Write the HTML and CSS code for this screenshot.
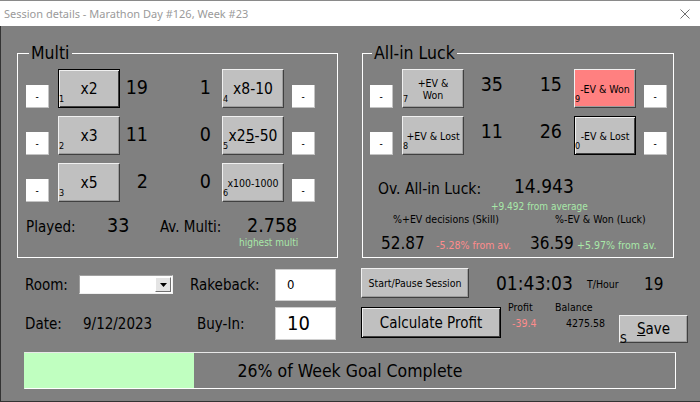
FILE: index.html
```html
<!DOCTYPE html>
<html>
<head>
<meta charset="utf-8">
<title>Session details</title>
<link rel="stylesheet" href="styles.css">
</head>
<body>
<div class="titlebar">
  <span class="ttl">Session details - Marathon Day #126, Week #23</span>
  <svg class="close" viewBox="0 0 10 10" width="10" height="10"><path d="M0.5 0.5 L9.5 9.5 M9.5 0.5 L0.5 9.5" stroke="#707070" stroke-width="1" fill="none"/></svg>
</div>
<div class="client">
  <div class="groups">
    <div class="group g-multi">
      <div class="gtitle">Multi</div>
      <div class="row">
        <div class="minus">-</div>
        <div class="btn b1 focus big">x2<span class="key">1</span></div>
        <div class="cnt cl">19</div>
        <div class="cnt cr">1</div>
        <div class="btn b2 big">x8-10<span class="key">4</span></div>
        <div class="minus m2">-</div>
      </div>
      <div class="row">
        <div class="minus">-</div>
        <div class="btn b1 big">x3<span class="key">2</span></div>
        <div class="cnt cl">11</div>
        <div class="cnt cr">0</div>
        <div class="btn b2 big">x2<u>5</u>-50<span class="key">5</span></div>
        <div class="minus m2">-</div>
      </div>
      <div class="row">
        <div class="minus">-</div>
        <div class="btn b1 big">x5<span class="key">3</span></div>
        <div class="cnt cl">2</div>
        <div class="cnt cr">0</div>
        <div class="btn b2 small">x100-1000<span class="key">6</span></div>
        <div class="minus m2">-</div>
      </div>
      <div class="stats">
        <span class="lbl played">Played:</span>
        <span class="num n33">33</span>
        <span class="lbl avl">Av. Multi:</span>
        <div class="avg">
          <span class="num">2.758</span>
          <span class="green hm">highest multi</span>
        </div>
      </div>
    </div>
    <div class="group g-luck">
      <div class="gtitle">All-in Luck</div>
      <div class="row">
        <div class="minus">-</div>
        <div class="btn b1 small">+EV &amp;<br>Won<span class="key">7</span></div>
        <div class="cnt cl">35</div>
        <div class="cnt cr">15</div>
        <div class="btn b2 small red">-EV &amp; Won<span class="key">9</span></div>
        <div class="minus m2">-</div>
      </div>
      <div class="row">
        <div class="minus">-</div>
        <div class="btn b1 small">+EV &amp; Lost<span class="key">8</span></div>
        <div class="cnt cl">11</div>
        <div class="cnt cr">26</div>
        <div class="btn b2 small focus">-EV &amp; Lost<span class="key">0</span></div>
        <div class="minus m2">-</div>
      </div>
      <div class="ovrow">
        <span class="lbl ovl">Ov. All-in Luck:</span>
        <span class="num">14.943</span>
      </div>
      <div class="green fromavg">+9.492 from average</div>
      <div class="caps">
        <span class="cap1">%+EV decisions (Skill)</span>
        <span>%-EV &amp; Won (Luck)</span>
      </div>
      <div class="pcts">
        <span class="pnum p1">52.87</span>
        <span class="redt d1">-5.28% from av.</span>
        <span class="pnum p2">36.59</span>
        <span class="green d2">+5.97% from av.</span>
      </div>
    </div>
  </div>

  <div class="bottom">
    <div class="bleft">
      <div class="frow">
        <span class="lbl room">Room:</span>
        <div class="combo"><span class="drop"><svg viewBox="0 0 7 4" width="7" height="4"><path d="M0 0 L7 0 L3.5 4 Z" fill="#000"/></svg></span></div>
        <span class="lbl rake">Rakeback:</span>
        <div class="input"><span class="v0">0</span></div>
      </div>
      <div class="frow r2">
        <span class="lbl date">Date:</span>
        <span class="lbl dval">9/12/2023</span>
        <span class="lbl buy">Buy-In:</span>
        <div class="input tall"><span class="v10">10</span></div>
      </div>
    </div>
    <div class="bright">
      <div class="rrow">
        <div class="btn start">Start/Pause Session</div>
        <span class="time">01:43:03</span>
        <span class="thour">T/Hour</span>
        <span class="tnum">19</span>
      </div>
      <div class="rrow r2">
        <div class="btn focus calc">Calculate Profit</div>
        <div class="pcol">
          <span class="sm">Profit</span>
          <span class="sm redt pv">-39.4</span>
        </div>
        <div class="bcol">
          <span class="sm">Balance</span>
          <span class="sm bv">4275.58</span>
        </div>
        <div class="btn save"><span><u>S</u>ave</span><span class="skey">S</span></div>
      </div>
    </div>
  </div>

  <div class="progress">
    <div class="fill" style="width:26%"></div>
    <span class="ptext">26% of Week Goal Complete</span>
  </div>
</div>
</body>
</html>
```
FILE: styles.css
```css
* { box-sizing: border-box; margin: 0; padding: 0; }
html, body { width: 700px; height: 402px; overflow: hidden; }
body {
  font-family: "DejaVu Sans Condensed", "DejaVu Sans", sans-serif;
  color: #000;
  background: #808080;
}

.titlebar {
  height: 26px;
  background: #fff;
  border-top: 1px solid #8a8a8a;
  display: flex;
  align-items: center;
  justify-content: space-between;
  padding: 0 10px 0 4px;
}
.ttl {
  font-family: "Noto Sans", "Open Sans", sans-serif;
  font-size: 11px;
  color: #9a9a9a;
}
.close { display: block; }

.client {
  height: 376px;
  border-left: 1px solid #333;
  border-bottom: 1px solid #333;
  padding: 27px 0 0 16px;
}

.groups { display: flex; gap: 24px; }
.group { border: 1px solid #fff; height: 205px; }
.g-multi { width: 321px; padding-left: 8px; }
.g-luck { width: 312px; padding-left: 7px; }
.gtitle {
  font-size: 17.5px;
  line-height: 20px;
  margin-top: -11px;
  margin-bottom: 6px;
  width: fit-content;
  padding: 0 2px;
  background: #808080;
}
.g-multi .gtitle { margin-left: 3px; }
.g-luck .gtitle { margin-left: 2px; }

.row { display: flex; align-items: flex-start; height: 39px; }
.row + .row { margin-top: 8px; }

.minus {
  width: 23px;
  height: 23px;
  margin-top: 16px;
  background: #fff;
  border-right: 1px solid #c4c4c4;
  border-bottom: 1px solid #c4c4c4;
  font-size: 10px;
  line-height: 24px;
  text-align: center;
}
.minus.m2 { margin-left: 8px; }

.btn {
  position: relative;
  display: flex;
  align-items: center;
  justify-content: center;
  text-align: center;
  background: #c0c0c0;
  border: 1px solid;
  border-color: #f0f0f0 #404040 #404040 #f0f0f0;
  box-shadow: inset -1px -1px #9c9c9c;
}
.btn.focus {
  border-color: #000;
  box-shadow: inset 1px 1px #f0f0f0, inset -1px -1px #404040;
}
.btn.red { background: #ff8080; }
.row .btn { width: 62px; height: 39px; }
.row .btn.b1 { margin-left: 9px; }
.g-multi .row .btn.b2 { margin-left: 11px; }
.g-luck .row .btn.b2 { margin-left: 12px; }
.btn.big { font-size: 15.5px; }
.btn.small { font-size: 10.5px; line-height: 12px; }
.key {
  position: absolute;
  left: 0;
  bottom: 3px;
  font-size: 9px;
  line-height: 9px;
}

.cnt { font-size: 19.5px; line-height: 24px; margin-top: 7px; text-align: right; }
.g-multi .cl { width: 28px; }
.g-multi .cr { width: 63px; }
.g-luck .cnt { margin-top: 4px; }
.g-luck .cl { width: 39px; }
.g-luck .cr { width: 59px; }

.lbl { font-size: 15px; line-height: 24px; }
.num { font-size: 19.5px; line-height: 24px; }
.green { color: #a8e8a8; }
.redt { color: #ff8c8c; }

.stats { display: flex; align-items: baseline; margin-top: 12px; }
.played { width: 81px; }
.n33 { width: 53px; }
.avl { width: 79px; }
.avg { display: flex; flex-direction: column; }
.avg .num { margin-left: 8px; }
.hm { font-size: 10px; line-height: 9px; }

.ovrow { display: flex; align-items: flex-start; margin-top: 19px; }
.ovl { font-size: 15.5px; width: 136px; margin-left: 8px; margin-top: 3px; }
.ovrow .num { font-size: 19px; }
.fromavg { font-size: 10px; line-height: 12px; margin-left: 121px; }
.caps { display: flex; font-size: 10.5px; line-height: 13px; }
.cap1 { margin-left: 23px; width: 162px; }
.pcts { display: flex; align-items: baseline; margin-top: 6px; }
.pnum { font-size: 17px; line-height: 22px; }
.p1 { margin-left: 11px; width: 55px; }
.d1 { width: 94px; font-size: 10.5px; }
.p2 { width: 47px; }
.d2 { font-size: 10.5px; }

.bottom { display: flex; margin-top: 10px; }
.bleft { width: 344px; padding-left: 8px; }
.frow { display: flex; align-items: center; height: 33px; }
.frow.r2 { margin-top: 6px; }
.room { width: 54px; }
.combo {
  width: 94px;
  height: 19px;
  background: #fff;
  border: 1px solid;
  border-color: #a0a0a0 #f0f0f0 #f0f0f0 #a0a0a0;
  display: flex;
  justify-content: flex-end;
  align-items: stretch;
  padding: 1px;
}
.drop {
  width: 16px;
  background: #e4e4e4;
  border: 1px solid;
  border-color: #fff #707070 #707070 #fff;
  display: flex;
  align-items: center;
  justify-content: center;
}
.drop svg { display: block; }
.rake { margin-left: 17px; width: 85px; }
.input {
  width: 61px;
  height: 32px;
  background: #fff;
  border: 1px solid #d0d0d0;
  padding-left: 11px;
  align-self: flex-end;
}
.input.tall { height: 33px; }
.v0 { display: block; font-size: 13px; line-height: 16px; padding-top: 7px; }
.v10 { display: block; font-size: 20px; line-height: 24px; padding-top: 3px; }
.date { width: 58px; }
.dval { width: 114px; }
.buy { width: 78px; }

.rrow { display: flex; align-items: flex-start; height: 33px; }
.rrow.r2 { margin-top: 6px; }
.btn.start { width: 108px; height: 30px; font-size: 10.5px; }
.time { font-size: 19px; line-height: 24px; margin-left: 27px; margin-top: 3px; width: 91px; }
.thour { font-size: 10.5px; line-height: 13px; margin-top: 10px; width: 57px; }
.tnum { font-size: 17px; line-height: 22px; margin-top: 5px; }
.btn.calc { width: 140px; height: 31px; font-size: 15px; }
.sm { display: block; font-size: 10.5px; line-height: 13px; }
.pcol { margin-left: 7px; width: 47px; margin-top: -6px; }
.pv { margin-left: 4px; margin-top: 3px; }
.bcol { width: 64px; margin-top: -6px; }
.bv { margin-left: 11px; margin-top: 3px; }
.btn.save { width: 69px; height: 28px; margin-top: 8px; font-size: 15px; }
.skey {
  position: absolute;
  left: 0;
  bottom: -3px;
  font-size: 12px;
  line-height: 12px;
}

.progress {
  display: grid;
  width: 652px;
  height: 37px;
  margin: 12px 0 0 7px;
  border: 1px solid;
  border-color: #e8e8e8 #fff #fff #c0ffc0;
}
.fill { grid-area: 1 / 1; background: #c0ffc0; }
.ptext {
  grid-area: 1 / 1;
  justify-self: center;
  align-self: center;
  font-size: 17.5px;
}
```
